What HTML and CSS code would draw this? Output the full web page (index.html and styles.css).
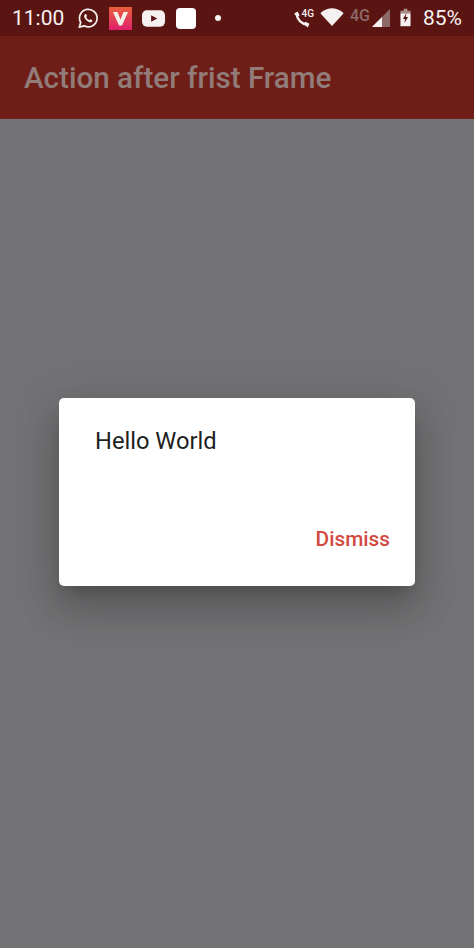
FILE: index.html
```html
<!DOCTYPE html>
<html lang="en">
<head>
<meta charset="utf-8">
<title>Action after frist Frame</title>
<link rel="stylesheet" href="styles.css">
</head>
<body>
<div class="page">
  <div class="status">
    <div class="status-left">
      <span class="time">11:00</span>
      <svg class="ic-wa" viewBox="0 0 24 24"><path d="M2.500 21.500l1.500-5.200A9.600 9.600 0 1 1 7.800 20z" fill="none" stroke="#f4eeee" stroke-width="1.900" stroke-linejoin="round"/><path d="M8.600 7.500c.6-.6 1.200-.5 1.500 0l.8 1.600c.1.400-.5 1-.8 1.500.7 1.400 1.800 2.500 3.300 3.200.5-.4 1-1.100 1.500-.9l1.600.9c.4.300.4.900 0 1.400-.9 1-2.200 1.200-3.600.6-2.300-1-4-2.700-4.800-4.800-.5-1.300-.4-2.500.5-3.500z" fill="#f4eeee"/></svg>
      <svg class="ic-v" viewBox="0 0 23 23"><defs><linearGradient id="vg" x1="0" y1="0" x2="0" y2="1"><stop offset="0" stop-color="#e8603a"/><stop offset="1" stop-color="#e01f6d"/></linearGradient></defs><rect width="23" height="23" fill="url(#vg)"/><path d="M4 5h4.500l3 7.500 3-7.500H19l-6 13.500h-3z" fill="#f6efe8"/></svg>
      <svg class="ic-yt" viewBox="0 0 24 17"><rect width="24" height="17" rx="5" fill="#f6f1f1"/><path d="M9.500 5l6.500 3.500-6.500 3.500z" fill="#5a1512"/></svg>
      <span class="ic-sq"></span>
      <span class="ic-dot"></span>
    </div>
    <div class="status-right">
      <svg class="ic-call" viewBox="0 0 15 15"><path d="M3.200 2.500C3.500 7.500 7.500 11.500 12.500 12" fill="none" stroke="#f6f1f1" stroke-width="2"/><path d="M1 2.200L4.200 .5 5.800 4 3.500 5.500zM9.500 11.500L11 9.500l3.500 1.700-1.500 3.300z" fill="#f6f1f1"/></svg>
      <span class="net">4G</span>
      <svg class="ic-wifi" viewBox="0 0 24 18"><path d="M.5 5.500Q1 4.500 2 3.800C8-1 16-1 22 3.800Q23 4.500 23.500 5.500L12 18z" fill="#f6f1f1"/></svg>
      <span class="net dim">4G</span>
      <svg class="ic-signal" viewBox="0 0 18 18"><path d="M18 0v18H0z" fill="#8d6a68"/><path d="M10 8V18H0z" fill="#f6f1f1"/></svg>
      <svg class="ic-batt" viewBox="0 0 12 19"><path d="M4 0h4v2h3.500v3H.5V2H4z" fill="#a98f8d"/><path d="M.5 5h11v14H.5z" fill="#f6f1f1"/><path d="M7 4.500L3.200 11h2.300l-.7 4.500L8.800 9H6.300z" fill="#5a1512"/></svg>
      <span class="pct">85%</span>
    </div>
  </div>
  <header class="appbar"><h1 class="title">Action after frist Frame</h1></header>
  <main class="content"></main>
  <div class="scrim">
    <div class="dialog">
      <p class="msg">Hello World</p>
      <div class="actions"><span class="dismiss">Dismiss</span></div>
    </div>
  </div>
</div>
</body>
</html>
```

FILE: styles.css
```css
* { box-sizing: border-box; }
html, body { margin: 0; padding: 0; }
body { font-family: Roboto, "Noto Sans", sans-serif; background: #737375; }
.page { position: relative; width: 474px; height: 948px; overflow: hidden; display: flex; flex-direction: column; }
.status { height: 36px; flex: none; background: #5a1512; display: flex; align-items: center; justify-content: space-between; padding: 0 12px; color: #f6f1f1; }
.status-left, .status-right { display: flex; align-items: center; }
.time { font-size: 21px; width: 52px; margin-right: 14px; white-space: nowrap; }
.ic-wa { width: 22px; height: 23px; margin-right: 10px; margin-left: -1px; }
.ic-v { width: 23px; height: 23px; margin-right: 10px; }
.ic-yt { width: 23px; height: 17px; margin-right: 11px; }
.ic-sq { width: 20px; height: 21px; border-radius: 4px; background: #fff; margin-right: 19px; }
.ic-dot { width: 6px; height: 6px; border-radius: 50%; background: #f6f1f1; }
.ic-call { width: 17px; height: 17px; margin-top: 3px; }
.net { font-size: 10px; font-weight: 500; margin-top: -10px; margin-left: -8px; margin-right: 6px; }
.net.dim { font-size: 16px; color: #8d6a68; margin: -6px 2px 0 6px; }
.ic-wifi { width: 24px; height: 18px; margin-top: -2px; }
.ic-signal { width: 18px; height: 18px; margin-right: 10px; }
.ic-batt { width: 11px; height: 19px; margin-right: 12px; margin-top: -2px; }
.pct { font-size: 21px; }
.appbar { height: 83px; flex: none; background: #6f1e17; display: flex; align-items: center; padding-left: 24px; box-shadow: 0 2px 3px rgba(0,0,0,.15); }
.title { margin: 0; font-size: 29.600px; font-weight: 500; color: #917c7a; white-space: nowrap; }
.content { flex: 1; background: #737375; }
.scrim { position: absolute; inset: 0; display: flex; justify-content: center; padding-top: 398px; pointer-events: none; }
.dialog { width: 356px; height: 188px; background: #fff; border-radius: 5px; box-shadow: 0 24px 38px 3px rgba(0,0,0,.14), 0 9px 46px 8px rgba(0,0,0,.1), 0 11px 15px -7px rgba(0,0,0,.2); display: flex; flex-direction: column; justify-content: space-between; }
.msg { margin: 0; padding: 28px 36px 0; font-size: 23.700px; line-height: 30px; color: #1f1f1f; }
.actions { display: flex; justify-content: flex-end; padding: 0 25px 34px; }
.dismiss { font-size: 20.800px; font-weight: 500; line-height: 26px; color: #d2493f; }
```
